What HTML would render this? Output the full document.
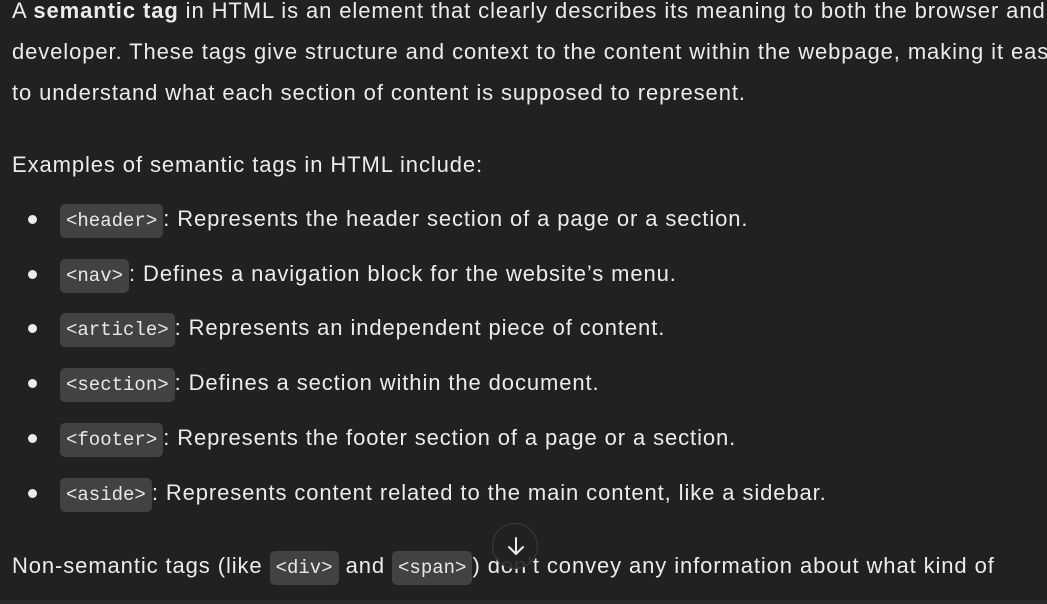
<!DOCTYPE html>
<html><head><style>
html,body{margin:0;padding:0;background:#212121;width:1047px;height:604px;overflow:hidden}
body{position:relative;font-family:"Liberation Sans",sans-serif;font-size:22px;letter-spacing:0.9px;color:#ececec}
.l{position:absolute;left:12px;white-space:nowrap;line-height:30px}
.b{position:absolute;left:28px;width:9px;height:9px;border-radius:50%;background:#ececec}
code{font-family:"Liberation Mono",monospace;font-size:19px;letter-spacing:0;background:#424242;border-radius:5px;padding:6px 6px;color:#e8e8e8}
.li{left:60px}
.btn{position:absolute;left:492px;top:523px;width:46px;height:46px;border-radius:50%;border:1px solid #3a3a3a;background:rgba(33,33,33,.9);box-sizing:border-box}
.strip{position:absolute;left:0;top:600px;width:1047px;height:4px;background:#2a2a2a}
</style></head><body>
<div class="l" style="top:-4px">A <b>semantic tag</b> in HTML is an element that clearly describes its meaning to both the browser and the</div>
<div class="l" style="top:37px">developer. These tags give structure and context to the content within the webpage, making it easier</div>
<div class="l" style="top:78px">to understand what each section of content is supposed to represent.</div>
<div class="l" style="top:150px">Examples of semantic tags in HTML include:</div>

<div class="b" style="top:215px"></div><div class="l li" style="top:204px"><code>&lt;header&gt;</code>: Represents the header section of a page or a section.</div>
<div class="b" style="top:270px"></div><div class="l li" style="top:259px"><code>&lt;nav&gt;</code>: Defines a navigation block for the website’s menu.</div>
<div class="b" style="top:324px"></div><div class="l li" style="top:313px"><code>&lt;article&gt;</code>: Represents an independent piece of content.</div>
<div class="b" style="top:379px"></div><div class="l li" style="top:368px"><code>&lt;section&gt;</code>: Defines a section within the document.</div>
<div class="b" style="top:434px"></div><div class="l li" style="top:423px"><code>&lt;footer&gt;</code>: Represents the footer section of a page or a section.</div>
<div class="b" style="top:489px"></div><div class="l li" style="top:478px"><code>&lt;aside&gt;</code>: Represents content related to the main content, like a sidebar.</div>

<div class="l" style="top:551px">Non-semantic tags (like <code>&lt;div&gt;</code> and <code>&lt;span&gt;</code>) don’t convey any information about what kind of</div>
<div class="btn"><svg width="44" height="44" viewBox="0 0 44 44"><path d="M23 14v16M16 23l7 7 7-7" stroke="#ececec" stroke-width="2" fill="none" stroke-linecap="round" stroke-linejoin="round"/></svg></div>
<div class="strip"></div>
</body></html>
